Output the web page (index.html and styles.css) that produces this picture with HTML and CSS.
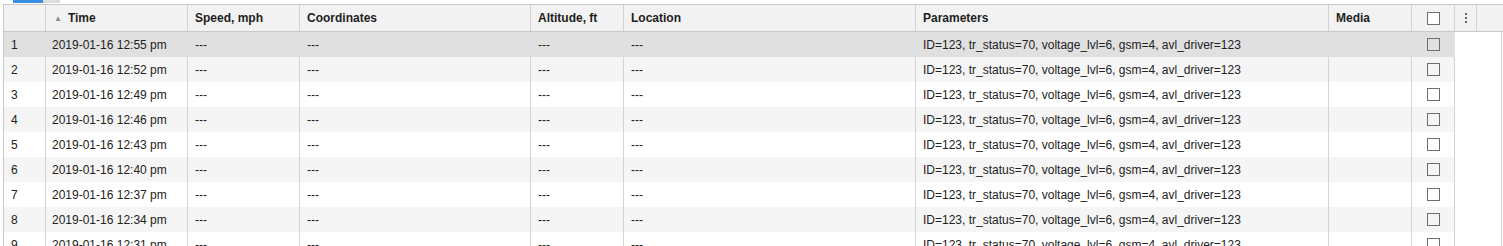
FILE: index.html
```html
<!DOCTYPE html>
<html>
<head>
<meta charset="utf-8">
<link rel="stylesheet" href="styles.css">
</head>
<body>
<div class="topbar"><span class="tab-active"></span><span class="tab"></span></div>
<div class="grid">
  <div class="head">
    <div class="hc c-num"></div>
    <div class="hc c-time"><span class="sort">&#9650;</span>Time</div>
    <div class="hc c-speed">Speed, mph</div>
    <div class="hc c-coord">Coordinates</div>
    <div class="hc c-alt">Altitude, ft</div>
    <div class="hc c-loc">Location</div>
    <div class="hc c-par">Parameters</div>
    <div class="hc c-media">Media</div>
    <div class="hc c-chk"><span class="box box-white"></span></div>
    <div class="hc c-menu"><svg width="4" height="12" viewBox="0 0 4 12"><rect x="1" y="1" width="2" height="2" fill="#666"/><rect x="1" y="5" width="2" height="2" fill="#666"/><rect x="1" y="9" width="2" height="2" fill="#666"/></svg></div>
    <div class="hc c-fill"></div>
  </div>
  <div class="body">
    <div class="rows">
      <div class="row sel"><div class="cell c-num">1</div><div class="cell c-time">2019-01-16 12:55 pm</div><div class="cell c-speed">---</div><div class="cell c-coord">---</div><div class="cell c-alt">---</div><div class="cell c-loc">---</div><div class="cell c-par">ID=123, tr_status=70, voltage_lvl=6, gsm=4, avl_driver=123</div><div class="cell c-media"></div><div class="cell c-chk"><span class="box"></span></div></div>
      <div class="row alt"><div class="cell c-num">2</div><div class="cell c-time">2019-01-16 12:52 pm</div><div class="cell c-speed">---</div><div class="cell c-coord">---</div><div class="cell c-alt">---</div><div class="cell c-loc">---</div><div class="cell c-par">ID=123, tr_status=70, voltage_lvl=6, gsm=4, avl_driver=123</div><div class="cell c-media"></div><div class="cell c-chk"><span class="box"></span></div></div>
      <div class="row"><div class="cell c-num">3</div><div class="cell c-time">2019-01-16 12:49 pm</div><div class="cell c-speed">---</div><div class="cell c-coord">---</div><div class="cell c-alt">---</div><div class="cell c-loc">---</div><div class="cell c-par">ID=123, tr_status=70, voltage_lvl=6, gsm=4, avl_driver=123</div><div class="cell c-media"></div><div class="cell c-chk"><span class="box"></span></div></div>
      <div class="row alt"><div class="cell c-num">4</div><div class="cell c-time">2019-01-16 12:46 pm</div><div class="cell c-speed">---</div><div class="cell c-coord">---</div><div class="cell c-alt">---</div><div class="cell c-loc">---</div><div class="cell c-par">ID=123, tr_status=70, voltage_lvl=6, gsm=4, avl_driver=123</div><div class="cell c-media"></div><div class="cell c-chk"><span class="box"></span></div></div>
      <div class="row"><div class="cell c-num">5</div><div class="cell c-time">2019-01-16 12:43 pm</div><div class="cell c-speed">---</div><div class="cell c-coord">---</div><div class="cell c-alt">---</div><div class="cell c-loc">---</div><div class="cell c-par">ID=123, tr_status=70, voltage_lvl=6, gsm=4, avl_driver=123</div><div class="cell c-media"></div><div class="cell c-chk"><span class="box"></span></div></div>
      <div class="row alt"><div class="cell c-num">6</div><div class="cell c-time">2019-01-16 12:40 pm</div><div class="cell c-speed">---</div><div class="cell c-coord">---</div><div class="cell c-alt">---</div><div class="cell c-loc">---</div><div class="cell c-par">ID=123, tr_status=70, voltage_lvl=6, gsm=4, avl_driver=123</div><div class="cell c-media"></div><div class="cell c-chk"><span class="box"></span></div></div>
      <div class="row"><div class="cell c-num">7</div><div class="cell c-time">2019-01-16 12:37 pm</div><div class="cell c-speed">---</div><div class="cell c-coord">---</div><div class="cell c-alt">---</div><div class="cell c-loc">---</div><div class="cell c-par">ID=123, tr_status=70, voltage_lvl=6, gsm=4, avl_driver=123</div><div class="cell c-media"></div><div class="cell c-chk"><span class="box"></span></div></div>
      <div class="row alt"><div class="cell c-num">8</div><div class="cell c-time">2019-01-16 12:34 pm</div><div class="cell c-speed">---</div><div class="cell c-coord">---</div><div class="cell c-alt">---</div><div class="cell c-loc">---</div><div class="cell c-par">ID=123, tr_status=70, voltage_lvl=6, gsm=4, avl_driver=123</div><div class="cell c-media"></div><div class="cell c-chk"><span class="box"></span></div></div>
      <div class="row"><div class="cell c-num">9</div><div class="cell c-time">2019-01-16 12:31 pm</div><div class="cell c-speed">---</div><div class="cell c-coord">---</div><div class="cell c-alt">---</div><div class="cell c-loc">---</div><div class="cell c-par">ID=123, tr_status=70, voltage_lvl=6, gsm=4, avl_driver=123</div><div class="cell c-media"></div><div class="cell c-chk"><span class="box"></span></div></div>
    </div>
    <div class="side"></div>
  </div>
</div>
</body>
</html>
```

FILE: styles.css
```css
html, body {
  margin: 0;
  padding: 0;
  background: #fff;
  overflow: hidden;
}
body {
  font-family: "Liberation Sans", Arial, sans-serif;
  font-size: 12px;
  color: #222;
}
.topbar {
  display: flex;
  height: 4px;
  padding-left: 13px;
}
.tab-active {
  width: 30px;
  height: 3px;
  background: #3a8ee6;
}
.tab {
  width: 17px;
  height: 3px;
  background: #dcdcdc;
}
.grid {
  margin-left: 3px;
  border-left: 1px solid #c9c9c9;
}
.head {
  display: flex;
  height: 28px;
  box-sizing: border-box;
  border-top: 1px solid #c9c9c9;
  border-bottom: 1px solid #c9c9c9;
  background: #f2f2f2;
}
.hc {
  box-sizing: border-box;
  border-right: 1px solid #d2d2d2;
  display: flex;
  align-items: center;
  padding-left: 7px;
  font-weight: bold;
  color: #1e1e1e;
  flex: none;
}
.sort {
  font-size: 8px;
  color: #8a8a8a;
  margin-left: 1px;
  margin-right: 6px;
  font-weight: normal;
}
.cell {
  box-sizing: border-box;
  border-right: 1px solid #d4d4d4;
  display: flex;
  align-items: center;
  padding-left: 7px;
  color: #222;
  flex: none;
  white-space: nowrap;
}
.c-num { width: 42px; }
.c-time { width: 142px; }
.c-speed { width: 112px; }
.c-coord { width: 231px; }
.c-alt { width: 93px; }
.c-loc { width: 292px; }
.c-par { width: 413px; }
.c-media { width: 83px; }
.hc.c-chk, .cell.c-chk { width: 43px; justify-content: center; padding-left: 0; }
.hc.c-menu { width: 22px; justify-content: center; padding-left: 0; }
.hc.c-fill { flex: 1; border-right: none; }
.box {
  display: block;
  width: 13px;
  height: 13px;
  box-sizing: border-box;
  border: 1px solid #6e6e6e;
  background: transparent;
}
.box-white { background: #fff; }
.body {
  display: flex;
}
.rows {
  display: flex;
  flex-direction: column;
}
.row {
  display: flex;
  height: 25px;
  background: #fff;
}
.row.alt { background: #f5f5f5; }
.row.sel { background: #e0e0e0; }
.row.sel .cell { border-right-color: #d3e6f6; }
.cell.c-time { padding-left: 6px; }
.side {
  flex: 1;
  margin-right: 1px;
  border-right: 1px solid #cfcfcf;
}
```
